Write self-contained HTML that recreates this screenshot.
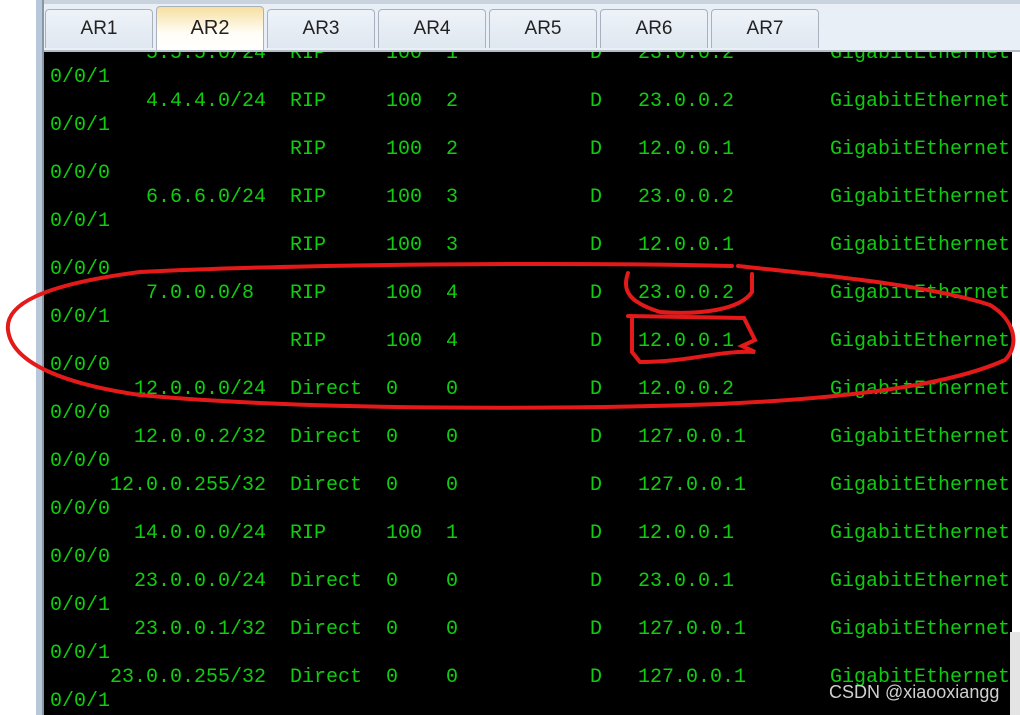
<!DOCTYPE html>
<html><head><meta charset="utf-8"><style>
*{margin:0;padding:0;box-sizing:border-box}
body{width:1020px;height:715px;background:#fff;position:relative;overflow:hidden;font-family:"Liberation Sans",sans-serif}
.strip{position:absolute;left:36px;top:0;width:8px;height:715px;background:#b8c8da;border-right:2px solid #8a97a6}
.bar{position:absolute;left:44px;top:0;width:976px;height:52px;background:#e9eff6;border-top:4px solid #c9d3de;border-bottom:2px solid #b4bcc6}
.tab{position:absolute;top:9px;height:39px;width:108px;border:1px solid #a9b2bc;border-bottom:none;border-radius:4px 4px 0 0;background:linear-gradient(#eef3f9,#dfe7f0);font-size:19px;color:#222;text-align:center;line-height:38px}
.tab.a{top:6px;height:44px;background:linear-gradient(#f7dfa0,#fffdf6 60%,#fff);line-height:42px;font-size:20px}
.term{position:absolute;left:44px;top:52px;width:968px;height:663px;background:#000;overflow:hidden}
.rs{position:absolute;left:1012px;top:52px;width:8px;height:663px;background:#fff}
.rs2{position:absolute;left:1010px;top:632px;width:10px;height:83px;background:#e4e4e4}
.r{position:absolute;left:0;height:24px;width:968px;font-family:"Liberation Mono",monospace;font-size:20px;line-height:24px;color:#10cc10;white-space:pre}
.r span{position:absolute;top:0}
.d{left:0;width:222px;text-align:right}
.wm{position:absolute;left:829px;top:682px;font-size:18px;color:#d0d0d0}
svg{position:absolute;left:0;top:0}
</style></head><body>
<div class="strip"></div>
<div class="bar"></div>
<div class="tab" style="left:45px">AR1</div>
<div class="tab a" style="left:156px">AR2</div>
<div class="tab" style="left:267px">AR3</div>
<div class="tab" style="left:378px">AR4</div>
<div class="tab" style="left:489px">AR5</div>
<div class="tab" style="left:600px">AR6</div>
<div class="tab" style="left:711px">AR7</div>
<div class="term" id="t"></div>
<div class="rs"></div><div class="rs2"></div>
<script>
var E=[["5.5.5.0/24","RIP","100","1","23.0.0.2","0/0/1"],["4.4.4.0/24","RIP","100","2","23.0.0.2","0/0/1"],["","RIP","100","2","12.0.0.1","0/0/0"],["6.6.6.0/24","RIP","100","3","23.0.0.2","0/0/1"],["","RIP","100","3","12.0.0.1","0/0/0"],["7.0.0.0/8 ","RIP","100","4","23.0.0.2","0/0/1"],["","RIP","100","4","12.0.0.1","0/0/0"],["12.0.0.0/24","Direct","0","0","12.0.0.2","0/0/0"],["12.0.0.2/32","Direct","0","0","127.0.0.1","0/0/0"],["12.0.0.255/32","Direct","0","0","127.0.0.1","0/0/0"],["14.0.0.0/24","RIP","100","1","12.0.0.1","0/0/0"],["23.0.0.0/24","Direct","0","0","23.0.0.1","0/0/1"],["23.0.0.1/32","Direct","0","0","127.0.0.1","0/0/1"],["23.0.0.255/32","Direct","0","0","127.0.0.1","0/0/1"]];
var h="";
E.forEach(function(e,i){var y=-10+i*48;
h+='<div class="r" style="top:'+y+'px"><span class="d">'+e[0]+'</span><span style="left:246px">'+e[1]+'</span><span style="left:342px">'+e[2]+'</span><span style="left:402px">'+e[3]+'</span><span style="left:546px">D</span><span style="left:594px">'+e[4]+'</span><span style="left:786px">GigabitEthernet</span></div>';
h+='<div class="r" style="top:'+(y+24)+'px"><span style="left:6px">'+e[5]+'</span></div>';});
document.getElementById('t').innerHTML=h;
</script>
<svg width="1020" height="715" fill="none" stroke="#e41a1a" stroke-width="4" stroke-linecap="round">
<path d="M732 266 C560 262 300 264 140 272 C40 285 5 305 8 330 C12 365 70 385 140 395 C300 410 550 410 720 404 C850 398 950 385 1005 360 C1020 345 1015 320 990 305 C930 285 820 275 738 266"/>
<path d="M628 273 C622 290 628 302 660 312 C700 315 740 310 752 292 L752 274"/>
<path d="M628 316 L744 318 L755 340 L742 346 L755 352 C720 350 690 362 640 362 L632 352 L632 318"/>
</svg>
<div class="wm">CSDN @xiaooxiangg</div>
</body></html>
